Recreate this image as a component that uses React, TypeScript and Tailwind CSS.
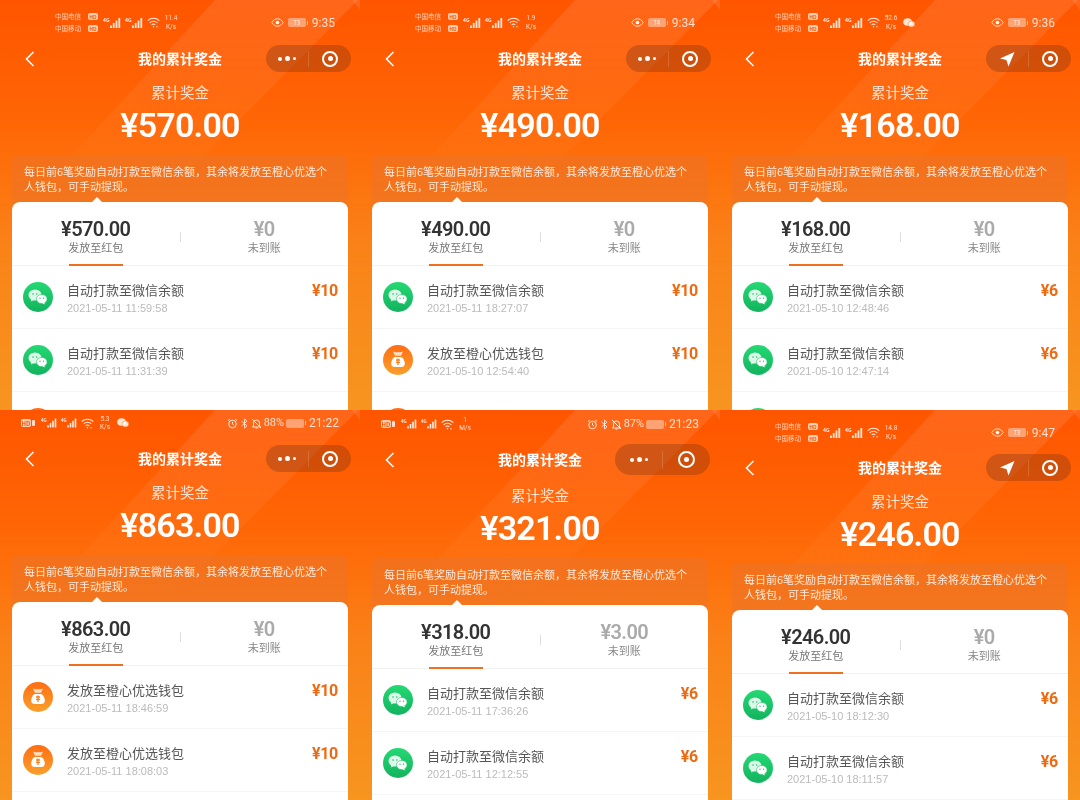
import React from 'react';

type Row = { kind: 'wx' | 'bag'; time: string; amount: string };

interface PanelData {
  statusType: 'dual' | 'single';
  speed: [string, string];
  hasWechat?: boolean;
  time: string;
  battery: string;
  locate?: boolean;
  bigCapsule?: boolean;
  statusClass: string;
  noteClass: string;
  total: string;
  sent: string;
  pending: string;
  rows: Row[];
  panelClass: string;
}

const panels: PanelData[] = [
  {
    statusType: 'dual', speed: ['11.4', 'K/s'], time: '9:35', battery: '73',
    statusClass: 'h-[45px]', noteClass: 'mt-[8px]', total: '¥570.00', sent: '¥570.00', pending: '¥0', panelClass: 'h-[410px]',
    rows: [
      { kind: 'wx', time: '2021-05-11 11:59:58', amount: '¥10' },
      { kind: 'wx', time: '2021-05-11 11:31:39', amount: '¥10' },
      { kind: 'bag', time: '', amount: '' },
    ],
  },
  {
    statusType: 'dual', speed: ['1.9', 'K/s'], time: '9:34', battery: '74',
    statusClass: 'h-[45px]', noteClass: 'mt-[8px]', total: '¥490.00', sent: '¥490.00', pending: '¥0', panelClass: 'h-[410px]',
    rows: [
      { kind: 'wx', time: '2021-05-11 18:27:07', amount: '¥10' },
      { kind: 'bag', time: '2021-05-10 12:54:40', amount: '¥10' },
      { kind: 'bag', time: '', amount: '' },
    ],
  },
  {
    statusType: 'dual', speed: ['52.6', 'K/s'], hasWechat: true, time: '9:36', battery: '73', locate: true,
    statusClass: 'h-[45px]', noteClass: 'mt-[8px]', total: '¥168.00', sent: '¥168.00', pending: '¥0', panelClass: 'h-[410px]',
    rows: [
      { kind: 'wx', time: '2021-05-10 12:48:46', amount: '¥6' },
      { kind: 'wx', time: '2021-05-10 12:47:14', amount: '¥6' },
      { kind: 'wx', time: '', amount: '' },
    ],
  },
  {
    statusType: 'single', speed: ['5.3', 'K/s'], hasWechat: true, time: '21:22', battery: '88%',
    statusClass: 'h-[35px] pb-[9px]', noteClass: 'mt-[8px]', total: '¥863.00', sent: '¥863.00', pending: '¥0', panelClass: 'h-[390px]',
    rows: [
      { kind: 'bag', time: '2021-05-11 18:46:59', amount: '¥10' },
      { kind: 'bag', time: '2021-05-11 18:08:03', amount: '¥10' },
    ],
  },
  {
    statusType: 'single', speed: ['1', 'M/s'], time: '21:23', battery: '87%', bigCapsule: true,
    statusClass: 'h-[34px] pb-[6px]', noteClass: 'mt-[8px]', total: '¥321.00', sent: '¥318.00', pending: '¥3.00', panelClass: 'h-[390px]',
    rows: [
      { kind: 'wx', time: '2021-05-11 17:36:26', amount: '¥6' },
      { kind: 'wx', time: '2021-05-11 12:12:55', amount: '¥6' },
    ],
  },
  {
    statusType: 'dual', speed: ['14.8', 'K/s'], time: '9:47', battery: '73', locate: true,
    statusClass: 'h-[44px] pt-[1px]', noteClass: 'mt-[7px]', total: '¥246.00', sent: '¥246.00', pending: '¥0', panelClass: 'h-[390px]',
    rows: [
      { kind: 'wx', time: '2021-05-10 18:12:30', amount: '¥6' },
      { kind: 'wx', time: '2021-05-10 18:11:57', amount: '¥6' },
    ],
  },
];

const Signal = ({ w = 18 }: { w?: number }) => (
  <svg width={w} height="12" viewBox="0 0 18 12" fill="#fff">
    <text x="0" y="5" fontSize="5" fontWeight="700">4G</text>
    <rect x="7" y="8.500" width="1.800" height="2.500" />
    <rect x="9.800" y="6" width="1.800" height="5" />
    <rect x="12.600" y="3.500" width="1.800" height="7.500" />
    <rect x="15.400" y="1" width="1.800" height="10" />
  </svg>
);

const Wifi = () => (
  <svg width="13" height="11" viewBox="0 0 13 11" fill="none" stroke="#fff" strokeWidth="1.100">
    <path d="M.7 3.600a8.400 8.400 0 0 1 11.600 0" />
    <path d="M2.700 5.800a5.400 5.400 0 0 1 7.600 0" />
    <path d="M4.700 7.900a2.600 2.600 0 0 1 3.600 0" />
    <circle cx="6.500" cy="9.800" r=".7" fill="#fff" stroke="none" />
    <circle cx="10" cy="9.800" r=".7" fill="#fff" stroke="none" />
  </svg>
);

const WechatMini = () => (
  <svg width="12" height="10" viewBox="0 0 12 10" fill="#fff" fillOpacity=".85">
    <ellipse cx="4.600" cy="4" rx="4.400" ry="3.800" />
    <ellipse cx="8.400" cy="6" rx="3.400" ry="3" stroke="#ff6a0a" strokeWidth=".5" />
  </svg>
);

const HdBadge = ({ className }: { className: string }) => (
  <span className={`flex items-center justify-center rounded-[2px] bg-white/70 font-bold text-[#e8620e] ${className}`}>HD</span>
);

const Battery = ({ value }: { value: string }) => (
  <div className="flex items-center gap-[1px]">
    <div className="flex h-[9px] w-[18px] items-center justify-center rounded-[2px] bg-white/40 text-[6px] text-white/90">{value}</div>
    <div className="h-[4px] w-[1px] bg-white/60" />
  </div>
);

const Speed = ({ v }: { v: [string, string] }) => (
  <div className="flex w-[16px] flex-col items-center font-['Roboto',sans-serif] text-[6.500px] leading-[8.500px] text-white/80">
    <span>{v[0]}</span>
    <span>{v[1]}</span>
  </div>
);

const DualStatus = ({ p }: { p: PanelData }) => (
  <div className="flex w-full items-center pl-[55px] pr-[25px] text-white/70">
    <div className="flex flex-col gap-[3px] text-[6.500px] leading-[9px]">
      <div className="flex items-center gap-[1px]"><span className="w-[32px]">中国电信</span><HdBadge className="h-[7px] w-[10px] text-[5px]" /></div>
      <div className="flex items-center gap-[1px]"><span className="w-[32px]">中国移动</span><HdBadge className="h-[7px] w-[10px] text-[5px]" /></div>
    </div>
    <div className="ml-[5px] flex items-center gap-[4px] opacity-85">
      <Signal />
      <Signal />
      <Wifi />
    </div>
    <div className="ml-[3px]"><Speed v={p.speed} /></div>
    {p.hasWechat && <div className="ml-[4px]"><WechatMini /></div>}
    <div className="ml-auto flex items-center gap-[4px]">
      <svg width="13" height="9" viewBox="0 0 13 9" fill="none" stroke="#fff" strokeOpacity=".8" strokeWidth="1">
        <path d="M.7 4.500C2.400 2 4.200.8 6.500.8s4.100 1.200 5.800 3.700C10.600 7 8.800 8.200 6.500 8.200S2.400 7 .7 4.500z" />
        <circle cx="6.500" cy="4.500" r="1.800" fill="#fff" stroke="none" />
      </svg>
      <Battery value={p.battery} />
      <span className="font-['Roboto',sans-serif] text-[12px] text-white/80">{p.time}</span>
    </div>
  </div>
);

const SingleStatus = ({ p }: { p: PanelData }) => (
  <div className="flex w-full items-center pl-[21px] pr-[21px] text-white/80">
    <div className="flex items-center gap-[1px]">
      <HdBadge className="h-[8px] w-[10px] text-[6px]" />
      <div className="h-[6px] w-[3px] rounded-[1px] bg-white/80" />
    </div>
    <div className="ml-[6px] flex items-center gap-[4px] opacity-90">
      <Signal w={16} />
      <Signal w={16} />
      <Wifi />
    </div>
    <div className="ml-[3px]"><Speed v={p.speed} /></div>
    {p.hasWechat && <div className="ml-[4px]"><WechatMini /></div>}
    <div className="ml-auto flex items-center gap-[2px]">
      <svg width="11" height="11" viewBox="0 0 11 11" fill="none" stroke="#fff" strokeOpacity=".85" strokeWidth="1">
        <circle cx="5.500" cy="6" r="3.800" />
        <path d="M5.500 3.800V6l1.400 1M1 2.500 2.800 1M10 2.500 8.200 1" />
      </svg>
      <svg width="9" height="11" viewBox="0 0 9 11" fill="none" stroke="#fff" strokeOpacity=".85" strokeWidth=".9">
        <path d="M1.500 3 7 7.800 4.500 10V1L7 3.200 1.500 8" />
      </svg>
      <svg width="11" height="11" viewBox="0 0 11 11" fill="none" stroke="#fff" strokeOpacity=".85" strokeWidth="1">
        <path d="M2.500 8V5a3 3 0 0 1 6 0v3l1 1h-8zM4.500 10h2M1 1l9 9" />
      </svg>
      <span className="font-['Roboto',sans-serif] text-[11px] text-white/80">{p.battery}</span>
      <Battery value="" />
      <span className="ml-[1px] font-['Roboto',sans-serif] text-[12px] text-white/80">{p.time}</span>
    </div>
  </div>
);

const WechatIcon = () => (
  <svg width="30" height="30" viewBox="0 0 30 30" className="shrink-0">
    <defs>
      <linearGradient id="wxg" x1="0" y1="0" x2="0" y2="1">
        <stop offset="0" stopColor="#25d873" />
        <stop offset="1" stopColor="#12b35e" />
      </linearGradient>
    </defs>
    <circle cx="15" cy="15" r="15" fill="url(#wxg)" />
    <ellipse cx="12" cy="13" rx="6.500" ry="5.500" fill="#fff" fillOpacity=".85" />
    <path d="M8.500 16.500 7.800 19.500l3-1.500z" fill="#fff" fillOpacity=".85" />
    <ellipse cx="18.800" cy="17" rx="5.300" ry="4.600" fill="#fff" stroke="#1cc76a" strokeWidth=".6" />
    <path d="M21 20.500l1.200 2-2.800-1.200z" fill="#fff" />
    <circle cx="10" cy="12" r=".8" fill="#1cc76a" />
    <circle cx="13.800" cy="12" r=".8" fill="#1cc76a" />
    <circle cx="17" cy="16.300" r=".7" fill="#1cc76a" />
    <circle cx="20.500" cy="16.300" r=".7" fill="#1cc76a" />
  </svg>
);

const BagIcon = () => (
  <svg width="30" height="30" viewBox="0 0 30 30" className="shrink-0">
    <defs>
      <linearGradient id="bagg" x1="0" y1="0" x2="0" y2="1">
        <stop offset="0" stopColor="#ff6d12" />
        <stop offset="1" stopColor="#f9a02b" />
      </linearGradient>
    </defs>
    <circle cx="15" cy="15" r="15" fill="url(#bagg)" />
    <path d="M10 6.500c1.700.9 3.300.9 5 .4 1.700.5 3.300.5 5-.4l-2 4.300h-6z" fill="#fff" fillOpacity=".75" />
    <path d="M11.500 12h7c2 1.500 3.300 4 3.300 6.500 0 2.500-1.500 3.500-3.500 3.500h-6.600c-2 0-3.500-1-3.500-3.500 0-2.500 1.300-5 3.300-6.500z" fill="#fff" />
    <path d="M15 13.500v6.500M13 15h4M13 17.300h4" stroke="#f9821b" strokeWidth="1.300" />
  </svg>
);

const Capsule = ({ locate, big }: { locate?: boolean; big?: boolean }) => (
  <div className={`flex items-center rounded-full bg-[#7a3413]/35 ${big ? 'mr-[10px] h-[31px] w-[95px]' : 'mr-[9px] h-[27px] w-[85px]'}`}>
    <div className="flex flex-1 items-center justify-center">
      {locate ? (
        <svg width="16" height="16" viewBox="0 0 16 16" fill="#fff">
          <path d="M15.500 1 1 7.500l6.400 1.400L9.500 15.500z" />
        </svg>
      ) : (
        <div className="flex items-center gap-[3px]">
          <div className="h-[4px] w-[4px] rounded-full bg-white" />
          <div className="h-[5px] w-[5px] rounded-full bg-white" />
          <div className="h-[3px] w-[3px] rounded-full bg-white" />
        </div>
      )}
    </div>
    <div className={`w-px bg-white/15 ${big ? 'h-[18px]' : 'h-[16px]'}`} />
    <div className="flex flex-1 items-center justify-center">
      <div className={`flex items-center justify-center rounded-full border-2 border-white ${big ? 'h-[17px] w-[17px]' : 'h-[16px] w-[16px]'}`}>
        <div className="h-[5px] w-[5px] rounded-full bg-white" />
      </div>
    </div>
  </div>
);

const Panel = ({ p }: { p: PanelData }) => (
  <div className={`relative overflow-hidden bg-[linear-gradient(180deg,#ff5500_0%,#ff6605_30%,#fa8218_60%,#f7951f_100%)] ${p.panelClass}`}>
    {/* diagonal light stripe of the header art, fades out downwards */}
    <svg className="absolute left-0 top-0" width="360" height="200" viewBox="0 0 360 200">
      <defs>
        <linearGradient id="stripe" x1="0" y1="0" x2="0" y2="1">
          <stop offset="0" stopColor="#fff" stopOpacity=".1" />
          <stop offset="1" stopColor="#fff" stopOpacity="0" />
        </linearGradient>
      </defs>
      <polygon points="215,0 358,0 170,190 40,190" fill="url(#stripe)" />
      <polygon points="352,0 360,0 360,10" fill="#fff" fillOpacity=".1" />
    </svg>

    <div className="relative flex h-full flex-col">
      <div className={`flex shrink-0 items-center ${p.statusClass}`}>
        {p.statusType === 'dual' ? <DualStatus p={p} /> : <SingleStatus p={p} />}
      </div>

      <div className={`relative flex shrink-0 items-center justify-end ${p.bigCapsule ? 'h-[31px]' : 'h-[27px]'}`}>
        <svg className="absolute left-[25px] top-1/2 -translate-y-1/2" width="10" height="16" viewBox="0 0 10 16" fill="none" stroke="#fff" strokeWidth="1.600">
          <path d="M8.500 1 1.500 8l7 7" />
        </svg>
        <span className="absolute inset-x-0 text-center text-[14px] font-bold text-white">我的累计奖金</span>
        <Capsule locate={p.locate} big={p.bigCapsule} />
      </div>

      <div className="mt-[10px] shrink-0 text-center text-[14.500px] leading-[20px] text-white/80">累计奖金</div>
      <div className="mt-[1px] h-[44px] shrink-0 text-center font-['Roboto','Noto_Sans_CJK_SC',sans-serif] text-[34px] font-semibold leading-[44px] tracking-[-0.8px] text-white">{p.total}</div>

      <div className={`mx-[12px] h-[60px] shrink-0 rounded-t-[6px] bg-[#e8742f]/45 px-[12px] pt-[9px] text-[11px] leading-[15px] text-white/85 ${p.noteClass}`}>
        每日前6笔奖励自动打款至微信余额，其余将发放至橙心优选个人钱包，可手动提现。
      </div>

      <div className="relative z-10 mx-[12px] mt-[-13px] flex-1 rounded-t-[8px] bg-white">
        <div className="absolute left-[79px] top-[-5px] h-0 w-0 border-x-[6px] border-b-[6px] border-x-transparent border-b-white" />
        <div className="relative flex h-[64px] border-b border-[#f2f2f2] pt-[16px]">
          <div className="flex flex-1 flex-col items-center">
            <span className="font-['Roboto',sans-serif] text-[20px] font-semibold leading-[22px] tracking-[-0.6px] text-[#333]">{p.sent}</span>
            <span className="text-[11px] leading-[14px] text-[#777]">发放至红包</span>
          </div>
          <div className="mt-[14px] h-[10px] w-px bg-[#ddd]" />
          <div className="flex flex-1 flex-col items-center">
            <span className="font-['Roboto',sans-serif] text-[20px] font-semibold leading-[22px] tracking-[-0.6px] text-[#aaa]">{p.pending}</span>
            <span className="text-[11px] leading-[14px] text-[#888]">未到账</span>
          </div>
          <div className="absolute bottom-[-1px] left-[57px] h-[2px] w-[54px] bg-[#f0701e]" />
        </div>
        {p.rows.map((r, i) => (
          <div key={i} className="flex h-[63px] items-center border-b border-[#f5f5f5] pl-[11px] pr-[10px]">
            {r.kind === 'wx' ? <WechatIcon /> : <BagIcon />}
            {r.time && (
              <>
                <div className="ml-[14px] flex flex-1 flex-col self-start pt-[15px]">
                  <span className="text-[13px] leading-[18px] text-[#555]">
                    {r.kind === 'wx' ? '自动打款至微信余额' : '发放至橙心优选钱包'}
                  </span>
                  <span className="mt-[1px] font-['Liberation_Sans',sans-serif] text-[11px] leading-[16px] text-[#bbb]">{r.time}</span>
                </div>
                <span className="self-start pt-[15px] font-['Roboto',sans-serif] text-[16px] font-bold leading-[20px] tracking-[-0.3px] text-[#ee6a12]">{r.amount}</span>
              </>
            )}
          </div>
        ))}
      </div>
    </div>
  </div>
);

export default function App() {
  return (
    <div className="grid h-[800px] w-[1080px] grid-cols-3 overflow-hidden bg-white font-['Noto_Sans_CJK_SC','Noto_Sans',sans-serif] blur-[0.4px]">
      {panels.map((p, i) => (
        <Panel key={i} p={p} />
      ))}
    </div>
  );
}
